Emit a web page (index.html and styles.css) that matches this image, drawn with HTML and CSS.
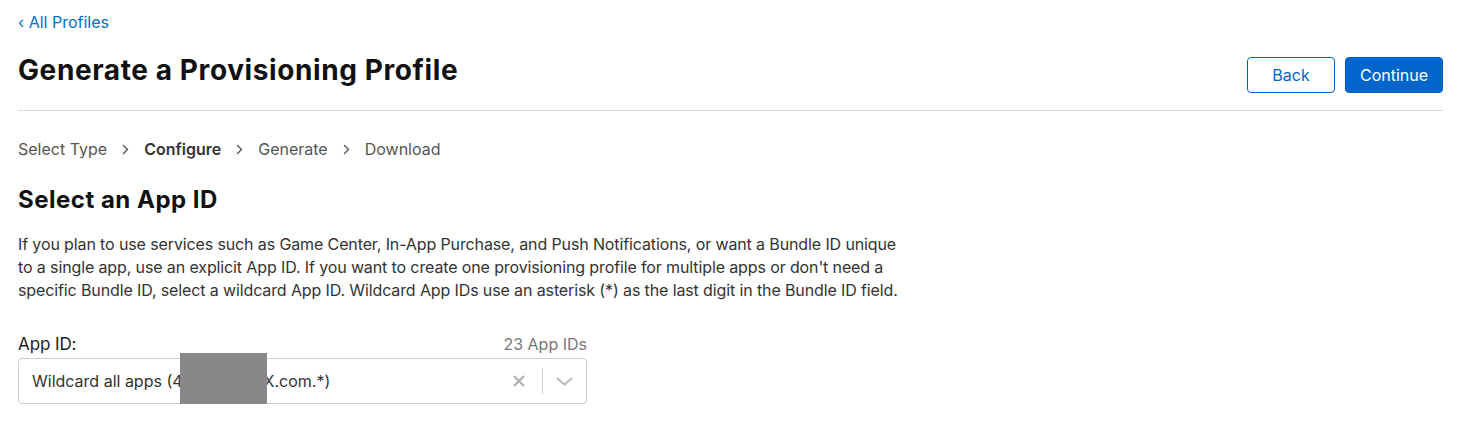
FILE: index.html
```html
<!DOCTYPE html>
<html lang="en">
<head>
<meta charset="utf-8">
<title>Generate a Provisioning Profile</title>
<link rel="stylesheet" href="styles.css">
</head>
<body>
<div class="page">
  <a class="back-link" href="#"><span class="lt">‹</span> All Profiles</a>
  <header class="head">
    <h1 class="title">Generate a Provisioning Profile</h1>
    <div class="actions">
      <button class="btn btn-secondary" type="button">Back</button>
      <button class="btn btn-primary" type="button">Continue</button>
    </div>
  </header>
  <nav class="steps">
    <span class="step">Select Type</span>
    <svg class="sep" width="7" height="11" viewBox="0 0 7 11"><path d="M1.5 1.5 L5.5 5.5 L1.5 9.5" fill="none" stroke="#555" stroke-width="1.4" stroke-linecap="round" stroke-linejoin="round"/></svg>
    <span class="step current">Configure</span>
    <svg class="sep" width="7" height="11" viewBox="0 0 7 11"><path d="M1.5 1.5 L5.5 5.5 L1.5 9.5" fill="none" stroke="#555" stroke-width="1.4" stroke-linecap="round" stroke-linejoin="round"/></svg>
    <span class="step">Generate</span>
    <svg class="sep" width="7" height="11" viewBox="0 0 7 11"><path d="M1.5 1.5 L5.5 5.5 L1.5 9.5" fill="none" stroke="#555" stroke-width="1.4" stroke-linecap="round" stroke-linejoin="round"/></svg>
    <span class="step">Download</span>
  </nav>
  <h2 class="section-title">Select an App ID</h2>
  <p class="desc">If you plan to use services such as Game Center, In-App Purchase, and Push Notifications, or want a Bundle ID unique to a single app, use an explicit App ID. If you want to create one provisioning profile for multiple apps or don't need a specific Bundle ID, select a wildcard App ID. Wildcard App IDs use an asterisk (*) as the last digit in the Bundle ID field.</p>
  <div class="field">
    <div class="field-head">
      <label class="label">App ID:</label>
      <span class="count">23 App IDs</span>
    </div>
    <div class="select">
      <span class="value">Wildcard all apps (4XXXXXXX.X.com.*)</span>
      <span class="controls">
        <svg class="clear" width="12" height="12" viewBox="0 0 12 12"><path d="M1 1 L11 11 M11 1 L1 11" stroke="#b0b0b0" stroke-width="2.2" stroke-linecap="butt"/></svg>
        <span class="divider"></span>
        <svg class="chev" width="17" height="9" viewBox="0 0 17 9"><path d="M1.5 1.5 L8.5 7.5 L15.5 1.5" fill="none" stroke="#b8b8b8" stroke-width="2" stroke-linecap="round" stroke-linejoin="round"/></svg>
      </span>
      <span class="redact"></span>
    </div>
  </div>
</div>
</body>
</html>
```
FILE: styles.css
```css
* { box-sizing: border-box; }
html, body { margin: 0; padding: 0; background: #fff; }
body {
  font-family: Inter, "Noto Sans", "Liberation Sans", sans-serif;
  color: #1d1d1f;
  -webkit-font-smoothing: antialiased;
}
.page {
  padding: 12px 17px 0 18px;
}
.back-link {
  display: inline-block;
  color: #0070c9;
  text-decoration: none;
  font-size: 16px;
  line-height: 20px;
}
.head {
  display: flex;
  justify-content: space-between;
  align-items: flex-end;
  padding-top: 21px;
  padding-bottom: 17px;
  border-bottom: 1px solid #d6d6d6;
}
.title {
  margin: 0 0 6px;
  font-size: 28px;
  line-height: 34px;
  font-weight: 700;
  letter-spacing: 0.6px;
  color: #111;
}
.actions {
  display: flex;
  gap: 10px;
}
.btn {
  font-family: inherit;
  font-size: 16px;
  height: 36px;
  border-radius: 4px;
  padding: 0;
  cursor: pointer;
}
.btn-secondary {
  background: #fff;
  color: #0066cc;
  border: 1px solid #0066cc;
  width: 88px;
}
.btn-primary {
  background: #0066cc;
  color: #fff;
  border: 1px solid #0066cc;
  width: 98px;
}
.steps {
  display: flex;
  align-items: center;
  gap: 15px;
  margin-top: 28px;
  font-size: 16px;
  line-height: 20px;
  color: #555;
}
.steps .current { font-weight: 600; color: #333; }
.steps .sep { flex: none; }
.section-title {
  margin: 26px 0 0;
  font-size: 24px;
  line-height: 30px;
  font-weight: 700;
  color: #111;
  letter-spacing: 0.5px;
}
.desc {
  margin: 18px 0 0;
  max-width: 890px;
  font-size: 16px;
  line-height: 23px;
  color: #333;
  letter-spacing: -0.12px;
}
.field {
  width: 569px;
  margin-top: 32px;
}
.field-head {
  display: flex;
  justify-content: space-between;
  align-items: baseline;
  line-height: 20px;
}
.label { color: #1d1d1f; font-size: 17px; letter-spacing: -0.1px; }
.count { color: #777; font-size: 16px; }
.select {
  position: relative;
  display: flex;
  align-items: center;
  justify-content: space-between;
  height: 46px;
  margin-top: 4px;
  border: 1px solid #cfcfcf;
  border-radius: 4px;
  padding-left: 13px;
  font-size: 16px;
  color: #333;
}
.controls {
  display: flex;
  align-items: center;
  height: 100%;
}
.clear { margin-right: 17px; }
.divider {
  width: 1px;
  height: 26px;
  background: #d0d0d0;
}
.chev { margin: 0 13px 0 13px; }
.redact {
  position: absolute;
  left: 161px;
  top: -6px;
  width: 87px;
  height: 51px;
  background: #888;
}
```
